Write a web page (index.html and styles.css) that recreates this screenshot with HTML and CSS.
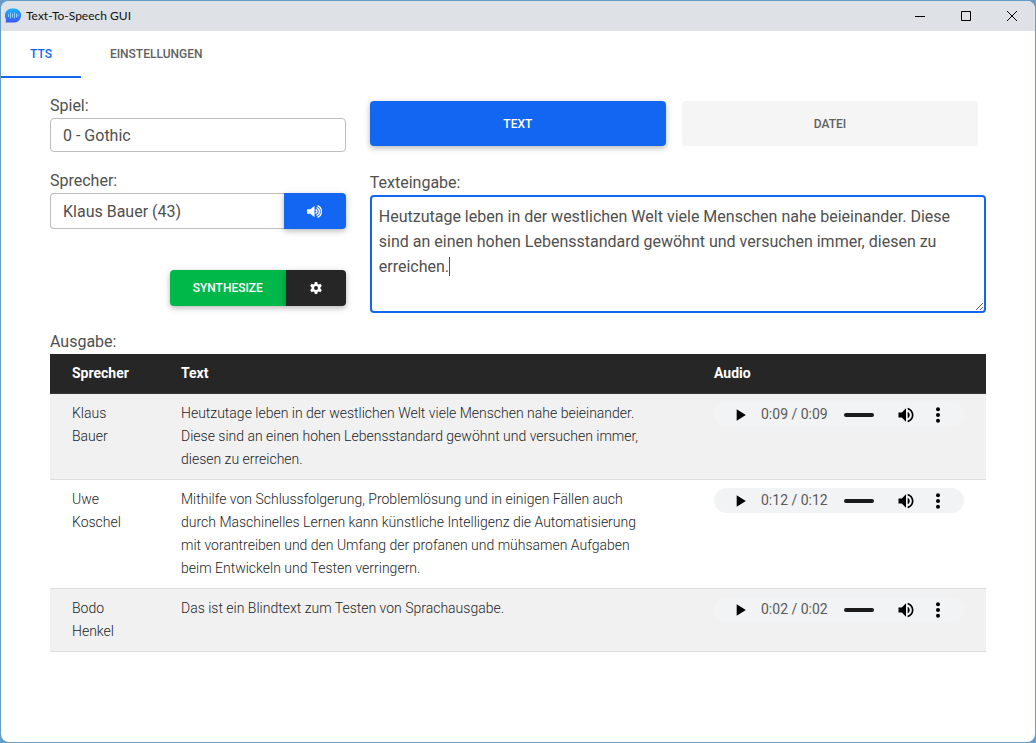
FILE: index.html
```html
<!DOCTYPE html>
<html lang="de">
<head>
<meta charset="utf-8">
<title>Text-To-Speech GUI</title>
<link rel="stylesheet" href="styles.css">
</head>
<body>
<svg class="sprite" aria-hidden="true">
  <symbol id="play" viewBox="0 0 24 24"><path d="M8 5v14l11-7z"/></symbol>
  <symbol id="volume" viewBox="0 0 24 24"><path d="M3 9v6h4l5 5V4L7 9H3zm13.5 3A4.5 4.5 0 0 0 14 7.97v8.05c1.48-.73 2.5-2.25 2.5-4.02zM14 3.23v2.06c2.89.86 5 3.54 5 6.71s-2.11 5.85-5 6.71v2.06c4.01-.91 7-4.49 7-8.77s-2.99-7.86-7-8.77z"/></symbol>
  <symbol id="more" viewBox="0 0 24 24"><circle cx="12" cy="5" r="2.4"/><circle cx="12" cy="12" r="2.4"/><circle cx="12" cy="19" r="2.4"/></symbol>
</svg>
<div class="window">
  <header class="titlebar">
    <svg class="logo" viewBox="0 0 16 16" aria-hidden="true">
      <defs><linearGradient id="bubble" x1="0" y1="0" x2="0" y2="1"><stop offset="0" stop-color="#18b4fb"/><stop offset="1" stop-color="#3d55fb"/></linearGradient></defs>
      <path fill="url(#bubble)" d="M8.500.500h1A6.500 6.500 0 0 1 16 7v1a6.500 6.500 0 0 1-6.500 6.500H.500Q1 13 1 11.500 0 10 0 8V7A6.500 6.500 0 0 1 6.500.500z"/>
      <path stroke="#8fd0ff" stroke-width="1" stroke-linecap="round" d="M3.500 6.500v2M5.500 5v5M7.500 6v3M9.500 5v5M11.500 6v3M13 7v1"/>
    </svg>
    <span class="title">Text-To-Speech GUI</span>
    <button class="win-btn" aria-label="Minimieren"><svg viewBox="0 0 10 10"><path d="M0 5.500h10"/></svg></button>
    <button class="win-btn" aria-label="Maximieren"><svg viewBox="0 0 10 10"><path d="M.5.500h9v9h-9z"/></svg></button>
    <button class="win-btn" aria-label="Schließen"><svg viewBox="0 0 10 10"><path d="M0 0l10 10M10 0L0 10"/></svg></button>
  </header>
  <nav class="tabs">
    <a class="tab active" href="#tts">TTS</a>
    <a class="tab" href="#einstellungen">EINSTELLUNGEN</a>
  </nav>
  <main class="content" id="tts">
    <div class="form">
      <section class="settings">
        <label class="label" for="spiel">Spiel:</label>
        <select class="select" id="spiel"><option>0 - Gothic</option></select>
        <label class="label next" for="sprecher">Sprecher:</label>
        <div class="group">
          <select class="select" id="sprecher"><option>Klaus Bauer (43)</option></select>
          <button class="btn blue preview" aria-label="Stimme anhören">
            <svg class="speaker" viewBox="0 0 16 14"><path fill="currentColor" d="M0 4.500h3.500L8 .800v12.400L3.500 9.500H0z"/><path fill="none" stroke="currentColor" stroke-width="1.500" stroke-linecap="round" d="M9.600 5.200a2 2 0 0 1 0 3.600M10.800 3a4.400 4.400 0 0 1 0 8M11.800 1a6.700 6.700 0 0 1 0 12"/></svg>
          </button>
        </div>
        <div class="actions">
          <button class="btn green">SYNTHESIZE</button>
          <button class="btn dark" aria-label="Optionen">
            <svg class="gear" viewBox="0 0 24 24"><path fill="currentColor" fill-rule="evenodd" d="M9.500 0h5l.8 3.800 2.100 1.200L21 3.700l2.600 4.500-2.900 2.600v2.400l2.900 2.600-2.600 4.500-3.600-1.300-2.100 1.200-.8 3.800h-5l-.8-3.800L6.600 19 3 20.300.4 15.800l2.900-2.600v-2.400L.4 8.200 3 3.700 6.600 5l2.100-1.200zM12 8a4 4 0 1 0 0 8 4 4 0 0 0 0-8z"/></svg>
          </button>
        </div>
      </section>
      <section class="entry">
        <div class="pills">
          <button class="btn blue">TEXT</button>
          <button class="btn light">DATEI</button>
        </div>
        <label class="label" for="texteingabe">Texteingabe:</label>
        <div class="editor">
          <textarea class="textarea" id="texteingabe" spellcheck="false">Heutzutage leben in der westlichen Welt viele Menschen nahe beieinander. Diese sind an einen hohen Lebensstandard gewöhnt und versuchen immer, diesen zu erreichen.</textarea>
          <span class="caret"></span>
        </div>
      </section>
    </div>
    <table class="output">
      <caption class="label">Ausgabe:</caption>
      <thead>
        <tr><th class="col-speaker">Sprecher</th><th>Text</th><th class="col-audio">Audio</th></tr>
      </thead>
      <tbody>
        <tr>
          <td>Klaus Bauer</td>
          <td class="spoken">Heutzutage leben in der westlichen Welt viele Menschen nahe beieinander. Diese sind an einen hohen Lebensstandard gewöhnt und versuchen immer, diesen zu erreichen.</td>
          <td><div class="player"><button class="icon play" aria-label="Abspielen"><svg><use href="#play"/></svg></button><span class="time">0:09 / 0:09</span><span class="track"></span><button class="icon" aria-label="Lautstärke"><svg><use href="#volume"/></svg></button><button class="icon" aria-label="Mehr"><svg><use href="#more"/></svg></button></div></td>
        </tr>
        <tr>
          <td>Uwe Koschel</td>
          <td class="spoken">Mithilfe von Schlussfolgerung, Problemlösung und in einigen Fällen auch durch Maschinelles Lernen kann künstliche Intelligenz die Automatisierung mit vorantreiben und den Umfang der profanen und mühsamen Aufgaben beim Entwickeln und Testen verringern.</td>
          <td><div class="player"><button class="icon play" aria-label="Abspielen"><svg><use href="#play"/></svg></button><span class="time">0:12 / 0:12</span><span class="track"></span><button class="icon" aria-label="Lautstärke"><svg><use href="#volume"/></svg></button><button class="icon" aria-label="Mehr"><svg><use href="#more"/></svg></button></div></td>
        </tr>
        <tr>
          <td>Bodo Henkel</td>
          <td class="spoken">Das ist ein Blindtext zum Testen von Sprachausgabe.</td>
          <td><div class="player"><button class="icon play" aria-label="Abspielen"><svg><use href="#play"/></svg></button><span class="time">0:02 / 0:02</span><span class="track"></span><button class="icon" aria-label="Lautstärke"><svg><use href="#volume"/></svg></button><button class="icon" aria-label="Mehr"><svg><use href="#more"/></svg></button></div></td>
        </tr>
      </tbody>
    </table>
  </main>
</div>
</body>
</html>
```
FILE: styles.css
```css
* { box-sizing: border-box; }

body {
  margin: 0;
  min-height: 100vh;
  display: flex;
  padding: 1px;
  background: #669dc7;
  color: #4f4f4f;
  font: 400 16px/24px Roboto, sans-serif;
}

button, select, textarea { font: inherit; color: inherit; margin: 0; }
button { border: 0; padding: 0; background: none; cursor: pointer; }

.sprite { position: absolute; width: 0; height: 0; }

.window {
  flex: 1;
  min-width: 0;
  background: #fff;
  border-radius: 8px;
  overflow: hidden;
}

/* Title bar */
.titlebar {
  display: flex;
  align-items: center;
  height: 30px;
  padding-left: 4px;
  background: #dee1e6;
  color: #111;
}
.logo { width: 16px; height: 16px; }
.title { flex: 1; padding-left: 5px; font: 12px/16px Lato, sans-serif; }
.win-btn { width: 46px; height: 30px; display: grid; place-items: center; }
.win-btn svg { width: 10px; height: 10px; fill: none; stroke: #000; stroke-width: 1; overflow: visible; }

/* Tabs */
.tabs { display: flex; }
.tab {
  padding: 15px 29px 14px;
  border-bottom: 2px solid transparent;
  color: #616161;
  font-size: 12px;
  line-height: 16px;
  font-weight: 500;
  text-decoration: none;
}
.tab.active { border-color: #1266f1; color: #1266f1; }

/* Form */
.content { padding: 16px 49px; }
.form { display: grid; grid-template-columns: 12fr 25fr; gap: 24px; }
.settings, .entry { display: flex; flex-direction: column; }
.label { color: #4f4f4f; text-align: left; }
.next { margin-top: 17px; }
.select {
  appearance: none;
  width: 100%;
  height: 34px;
  padding: 2px 12px 0;
  border: 1px solid #bdbdbd;
  border-radius: 4px;
  background: #fff;
}
.group { display: flex; }
.group .select { flex: 1; height: 36px; border-right: 0; border-radius: 4px 0 0 4px; }

.btn {
  display: grid;
  place-items: center;
  height: 36px;
  border-radius: 4px;
  color: #fff;
  font-size: 12px;
  line-height: 18px;
  font-weight: 500;
  box-shadow: 0 2px 5px rgba(0, 0, 0, .2), 0 2px 10px rgba(0, 0, 0, .1);
}
.blue { background: #1266f1; }
.preview { width: 62px; border-radius: 0 4px 4px 0; }
.speaker { width: 15px; height: 13px; }
.actions { display: flex; justify-content: flex-end; margin-top: 41px; }
.green { width: 116px; background: #00b74a; border-radius: 4px 0 0 4px; }
.dark { width: 60px; background: #262626; border-radius: 0 4px 4px 0; }
.gear { width: 12px; height: 12px; }

.pills {
  display: grid;
  grid-template-columns: 1fr 1fr;
  gap: 16px;
  margin: 7px 8px 25px 0;
}
.pills .btn { height: 45px; }
.pills .light { background: #f5f5f5; color: #616161; box-shadow: none; }

.editor { position: relative; display: flex; }
.textarea {
  width: 100%;
  height: 118px;
  padding: 7px;
  border: 2px solid #1266f1;
  border-radius: 4px;
  outline: 0;
  line-height: 25px;
  resize: vertical;
}
.caret { position: absolute; left: 79px; top: 62px; width: 1px; height: 19px; background: #4f4f4f; }

/* Output table */
.output {
  width: 100%;
  margin-top: 17px;
  border-collapse: separate;
  border-spacing: 0;
  table-layout: fixed;
  color: #212529;
  font-size: 14px;
  line-height: 23px;
}
.output caption { font-size: 16px; line-height: 24px; }
.output th, .output td { padding: 8px 22px; text-align: left; vertical-align: top; }
.output th { background: #262626; color: #fff; font-weight: 700; border-bottom: 1px solid #373737; }
.output td { font-weight: 300; border-bottom: 1px solid #dfdfdf; }
.output .spoken { padding-right: 42px; }
.output tbody tr:nth-child(odd) { background: #f1f1f1; }
.col-speaker { width: 109px; }
.col-audio { width: 294px; }

/* Audio player */
.player {
  display: flex;
  align-items: center;
  width: 250px;
  height: 25px;
  padding-left: 16px;
  border-radius: 13px;
  background: #f1f3f4;
}
.icon { width: 32px; height: 25px; display: grid; place-items: center; }
.icon svg { width: 20px; height: 20px; fill: #000; }
.play { width: 20px; }
.time { margin-left: 11px; color: #5a5a5a; font-weight: 400; }
.track { width: 30px; height: 4px; margin: 0 16px; border-radius: 2px; background: #1b1b1b; }
```
